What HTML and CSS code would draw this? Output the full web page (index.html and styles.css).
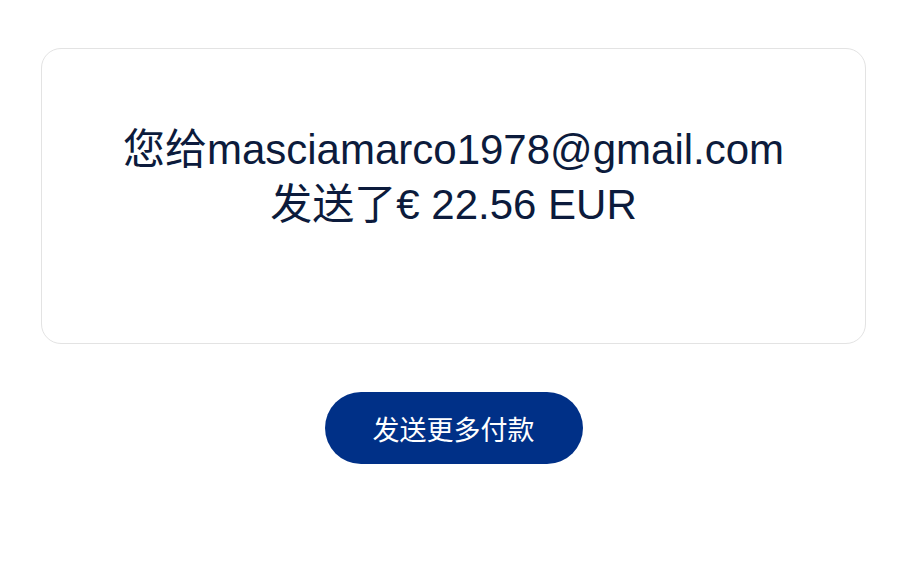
FILE: index.html
```html
<!DOCTYPE html>
<html lang="zh-CN">
<head>
    <meta charset="UTF-8">
    <meta name="viewport" content="width=device-width, initial-scale=1.0">
    <title>付款已发送</title>
    <link rel="stylesheet" href="styles.css">
</head>
<body>
    <div class="page">
        <!-- 结果卡片 -->
        <div class="result-card">
            <p class="result-text">您给masciamarco1978@gmail.com<br>发送了€ 22.56 EUR</p>
        </div>

        <!-- 再次付款 -->
        <div class="actions">
            <button class="btn-primary">发送更多付款</button>
        </div>
    </div>
</body>
</html>
```

FILE: styles.css
```css
body {
    margin: 0;
    padding: 0;
    background-color: #fff;
    font-family: "Liberation Sans", Arial, "Noto Sans CJK SC", sans-serif;
    color: #0c1b3c;
}
.page {
    width: 825px;
    margin: 0 0 0 41px;
    padding-top: 48px;
}
.result-card {
    box-sizing: border-box;
    height: 296px;
    border: 1px solid #e3e3e3;
    border-radius: 20px;
    padding-top: 73px;
}
.result-text {
    margin: 0;
    text-align: center;
    font-size: 42px;
    line-height: 55px;
}
.actions {
    display: flex;
    justify-content: center;
    padding-top: 48px;
}
.btn-primary {
    height: 72px;
    padding: 0 48px;
    border: none;
    border-radius: 36px;
    background-color: #003087;
    color: #fff;
    font-family: "Liberation Sans", Arial, "Noto Sans CJK SC", sans-serif;
    font-size: 27px;
    cursor: pointer;
}
```
